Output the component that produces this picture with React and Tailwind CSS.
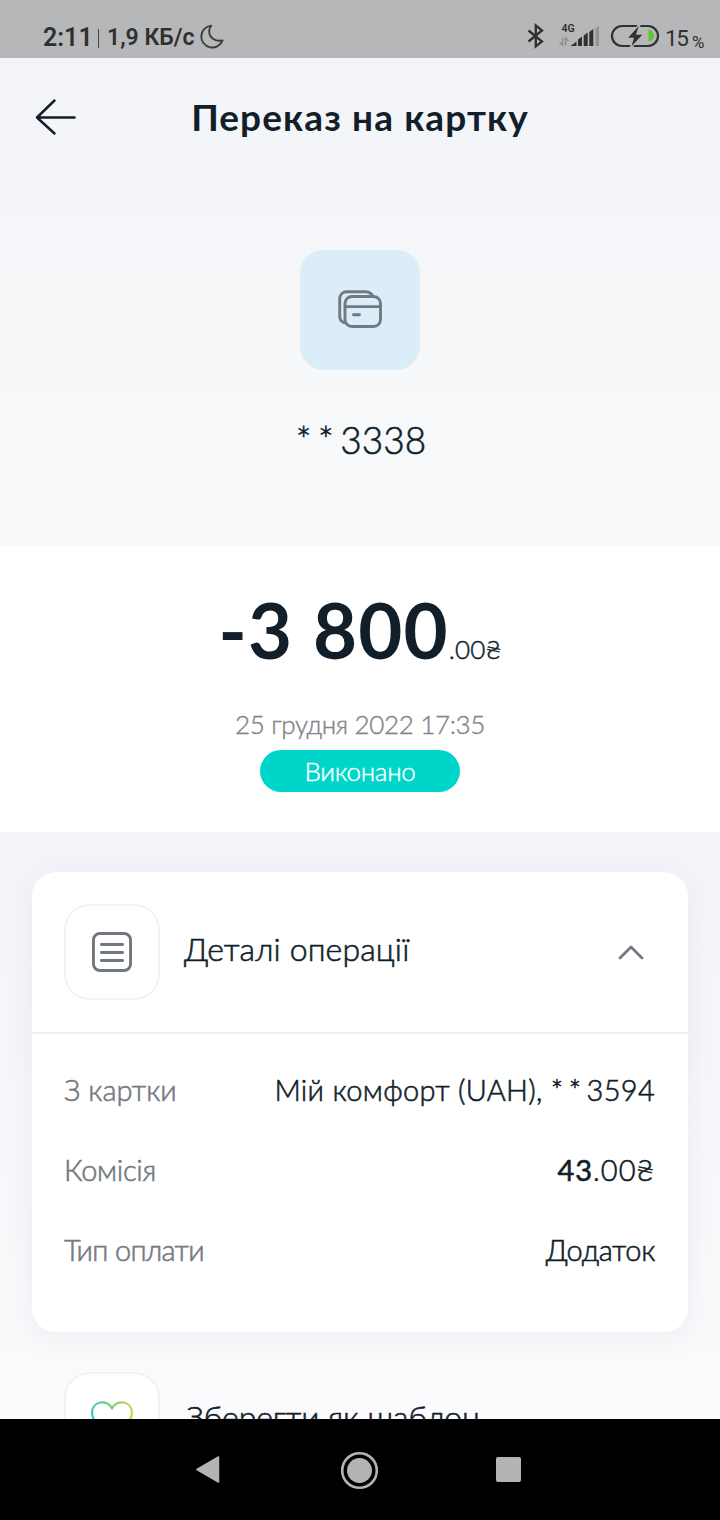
import React from "react";

function StatusBar() {
  return (
    <div className="flex h-[58px] w-full items-start bg-[#b6b7b9] pt-[24px] font-['Roboto',sans-serif] font-normal text-[#2f3030]">
      <div className="ml-[43px] w-[54px] whitespace-nowrap text-[25px] leading-[28px] font-semibold">2:11</div>
      <div className="mt-[5px] ml-[1px] h-[19px] w-px bg-[#444545]" />
      <div className="ml-[8px] w-[91px] whitespace-nowrap text-[23px] leading-[28px] font-semibold">1,9 КБ/с</div>
      <svg className="ml-[1px]" width="26" height="26" viewBox="0 0 26 26" fill="none" stroke="#3c3d3d" strokeWidth="1.9" strokeLinejoin="round">
        <path d="M12.2 1.6A11 11 0 1 0 23.6 16.4C16.5 18 9.600 13.500 10.200 6.500Q10.500 3.500 12.200 1.600Z" />
      </svg>
      <div className="flex-1" />
      <svg className="-mt-px" width="18" height="26" viewBox="0 0 18 26" fill="none" stroke="#2f3030" strokeWidth="2.3" strokeLinejoin="miter">
        <path d="M1.500 7.500L15 18.500L8.800 23.400V2.400L15 7.500L1.500 18.500" />
      </svg>
      <svg className="ml-[13px] overflow-visible" width="44" height="26" viewBox="0 0 44 26">
        <text x="3.500" y="8" fontSize="10.500" fontWeight="600" fill="#2f3030" fontFamily="Roboto">4G</text>
        <g stroke="#8b8c8d" strokeWidth="1.500" fill="none">
          <path d="M4.500 13.500V21L1.500 18.500M7.500 21.500V14L10.500 17" />
        </g>
        <path d="M12.500 22L18.500 17.500V22Z" fill="#2f3030" />
        <path d="M20 15.500L24 12.500V22H20ZM25.700 11.500L29.700 8.500V22H25.700ZM31.300 8L35.300 5V22H31.300Z" fill="#2f3030" />
        <path d="M37.500 4.500L41 1.500V22H37.500Z" fill="#929394" />
      </svg>
      <svg className="-mt-px ml-[8px]" width="50" height="28" viewBox="0 0 50 28" fill="none">
        <rect x="2" y="3" width="46" height="20" rx="10" stroke="#2f3030" strokeWidth="2.200" />
        <path d="M38.500 6.500C46 7.500 46 17.500 38.500 18.500Z" fill="#5cc926" />
        <path d="M30.500 0L16.500 15.500H23L20 26L34 11H27Z" fill="#2f3030" stroke="#b6b7b9" strokeWidth="1.500" />
      </svg>
      <div className="ml-[5px] w-[22px] text-[22.500px] leading-[28px] tracking-[-1.500px]">15</div>
      <div className="mr-[15px] ml-[5px] w-[13px] pt-[4px] text-[17px] leading-[28px]">%</div>
    </div>
  );
}

function Masked({ digits, className }) {
  return (
    <>
      <span className={className}>**</span>
      {digits}
    </>
  );
}

function Row({ label, labelClass, valueClass, children }) {
  return (
    <div className="flex h-20 items-center justify-between pr-px text-[29px] whitespace-nowrap">
      <span className={`text-[#747a80] ${labelClass}`}>{label}</span>
      <span className={valueClass}>{children}</span>
    </div>
  );
}

function IconTile({ children }) {
  return (
    <div className="flex size-24 shrink-0 items-center justify-center rounded-[26px] border-2 border-[#f3f3f4] bg-white">
      {children}
    </div>
  );
}

export default function App() {
  return (
    <div className="flex h-[1520px] w-[720px] flex-col overflow-hidden bg-white font-['Lato',sans-serif] font-light text-[#121f2a]">
      <StatusBar />

      <header className="flex h-[488px] shrink-0 flex-col items-center bg-linear-to-b from-[#f3f4f9] via-[#f5f7f9] to-[#f9fafc]">
        <div className="grid h-[116px] w-full grid-cols-[96px_1fr_96px] items-center">
          <svg className="ml-[35px]" width="42" height="38" viewBox="0 0 42 38" fill="none" stroke="#121f2a" strokeWidth="2.500" strokeLinecap="round" strokeLinejoin="round">
            <path d="M39.500 19.500H2M19.500 2.500L2 19.500L19.500 35.500" />
          </svg>
          <h1 className="pt-px text-center text-[37px] leading-[116px] font-bold tracking-[1.100px] whitespace-nowrap">Переказ на картку</h1>
        </div>
        <div className="mt-[76px] flex size-[120px] items-center justify-center rounded-[24px] bg-[#daedf8]">
          <svg width="48" height="48" viewBox="0 0 48 48" fill="none" stroke="#737980" strokeWidth="2.900" strokeLinecap="round">
            <rect x="9" y="10.500" width="35.500" height="30" rx="7" />
            <path d="M9 20.600H44.500M17.500 28.800H23.500" />
            <path d="M8 36.500C5 35.500 3.700 33.500 3.700 30.500V13C3.700 8.500 6.500 5.700 11 5.700H29.500C33 5.700 35 7 36.500 9.500" />
          </svg>
        </div>
        <div className="mt-[40px] pl-[2px] text-[37px] leading-[60px] [-webkit-text-stroke:0.6px]">
          <Masked digits="3338" className="tracking-[6.500px]" />
        </div>
      </header>

      <section className="flex h-[286px] shrink-0 flex-col items-center bg-white">
        <div className="mt-[34px] flex h-[100px] items-baseline leading-[100px] whitespace-nowrap">
          <span className="text-[76px] font-bold tracking-[1.200px]">-3 800</span>
          <span className="text-[26px] tracking-[0.200px] [-webkit-text-stroke:0.5px]">.00₴</span>
        </div>
        <div className="mt-6 text-[26px] leading-10 tracking-[-0.350px] whitespace-nowrap text-[#80858a] [-webkit-text-stroke:0.4px]">25 грудня 2022 17:35</div>
        <div className="mt-[6px] h-[42px] w-[200px] rounded-full bg-[#00d5ca] text-center text-[26px] leading-[43px] tracking-[-0.300px] text-white [-webkit-text-stroke:0.4px]">Виконано</div>
      </section>

      <main className="h-[587px] shrink-0 overflow-hidden bg-linear-to-b from-[#f3f4f9] to-[#fbfbfd] px-8 pt-10 [-webkit-text-stroke:0.6px]">
        <div className="h-[460px] rounded-[24px] bg-white shadow-[0_6px_32px_rgba(20,30,45,0.06)]">
          <div className="flex h-[162px] items-center border-b-2 border-[#f2f2f3] px-8">
            <IconTile>
              <svg width="40" height="40" viewBox="0 0 40 40" fill="none" stroke="#70777e" strokeWidth="2.900" strokeLinecap="round">
                <rect x="1.450" y="1.450" width="37.100" height="37.100" rx="6.500" />
                <path d="M9.400 12.500H30.600M9.400 20.500H30.600M9.400 28.500H30.600" />
              </svg>
            </IconTile>
            <h2 className="ml-[24px] flex-1 pb-[7px] text-[32px] tracking-[0.150px] whitespace-nowrap">Деталі операції</h2>
            <svg className="mr-[11px]" width="28" height="18" viewBox="0 0 28 18" fill="none" stroke="#737980" strokeWidth="2.800" strokeLinecap="round" strokeLinejoin="round">
              <path d="M3 15L14 4L25 15" />
            </svg>
          </div>
          <div className="px-8 pt-4">
            <Row label="З картки" labelClass="tracking-normal" valueClass="tracking-[0.300px]">
              Мій комфорт (UAH), <Masked digits="3594" className="tracking-[5.500px]" />
            </Row>
            <Row label="Комісія" labelClass="tracking-[-0.300px]" valueClass="tracking-[1px]">
              <b>43</b>.00₴
            </Row>
            <Row label="Тип оплати" labelClass="tracking-[-0.700px]" valueClass="tracking-[-0.300px]">
              Додаток
            </Row>
          </div>
        </div>
        <div className="mt-10 flex items-center px-8">
          <IconTile>
            <svg width="44" height="40" viewBox="0 0 44 40" fill="none">
              <defs>
                <linearGradient id="heart" x1="0" y1="0" x2="1" y2="0">
                  <stop offset="0" stopColor="#3fc8bd" />
                  <stop offset="0.500" stopColor="#7fce80" />
                  <stop offset="1" stopColor="#c5d850" />
                </linearGradient>
              </defs>
              <path d="M22 8.500C18 -1 2 .500 2 13C2 22 13 28 22 37C31 28 42 22 42 13C42 .500 26 -1 22 8.500Z" stroke="url(#heart)" strokeWidth="2.200" strokeLinejoin="round" />
            </svg>
          </IconTile>
          <h2 className="ml-[26px] pb-[6px] text-[32px] tracking-[-0.100px] whitespace-nowrap">Зберегти як шаблон</h2>
        </div>
      </main>

      <nav className="grid h-[101px] shrink-0 grid-cols-[150px_150px_150px] items-center justify-center bg-black">
        <svg className="mt-[35px] ml-[59px] self-start" width="28" height="32" viewBox="0 0 28 32">
          <path d="M3 15.500L24.500 3V28Z" fill="#b4b4b4" stroke="#b4b4b4" strokeWidth="1.500" strokeLinejoin="round" />
        </svg>
        <svg className="ml-[55px]" width="40" height="40" viewBox="0 0 40 40">
          <circle cx="19.500" cy="20.500" r="12.500" fill="#b4b4b4" />
          <circle cx="19.500" cy="20.500" r="17.300" fill="none" stroke="#b4b4b4" strokeWidth="2.600" />
        </svg>
        <div className="ml-[61px] size-[25px] rounded-[2px] bg-[#b4b4b4]" />
      </nav>
    </div>
  );
}
